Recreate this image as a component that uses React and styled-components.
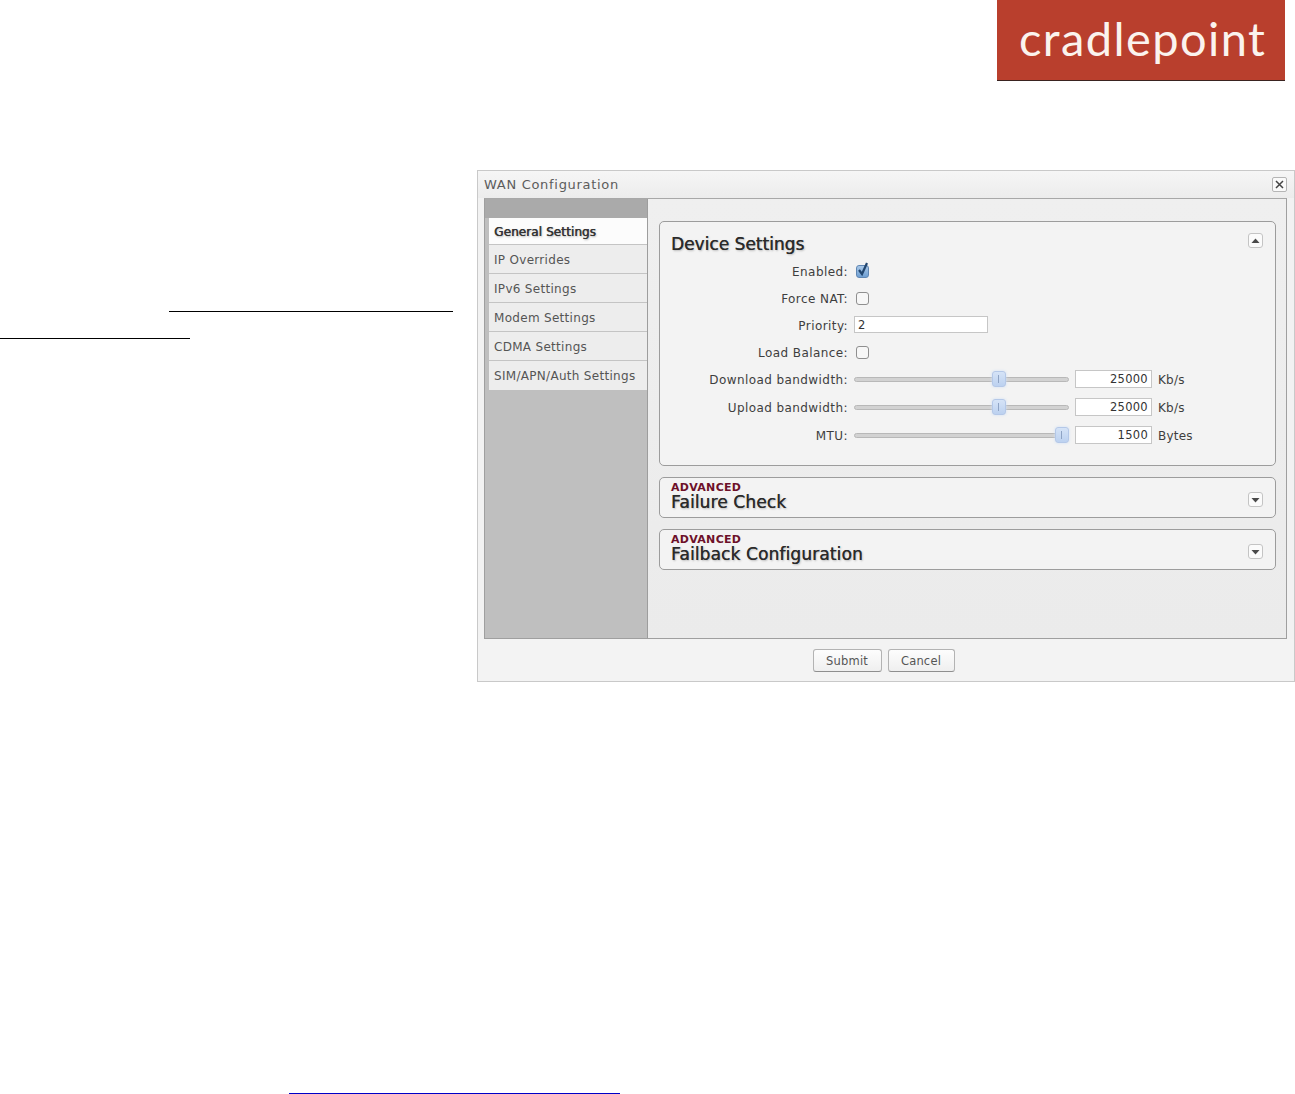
import React from 'react';
import styled, { createGlobalStyle } from 'styled-components';

const UI_FONT = '"DejaVu Sans", "Liberation Sans", sans-serif';

const GlobalStyle = createGlobalStyle`
  html, body {
    margin: 0;
    padding: 0;
    background: #fff;
    overflow: hidden;
  }
`;

const Page = styled.div`
  width: 1295px;
  height: 1094px;
  display: flex;
  flex-direction: column;
  font-family: ${UI_FONT};
`;

const Header = styled.header`
  height: 170px;
  display: flex;
  justify-content: flex-end;
  align-items: flex-start;
  padding-right: 10px;
  box-sizing: border-box;
`;

const Logo = styled.div`
  width: 288px;
  height: 81px;
  box-sizing: border-box;
  padding: 3px 0 0 22px;
  background: #b93f2d;
  border-bottom: 1px solid #3a2320;
  color: #fbf3ee;
  font-family: Lato, sans-serif;
  font-size: 47px;
  line-height: 70px;
  letter-spacing: 1.4px;
  white-space: nowrap;
`;

const Body = styled.div`
  display: flex;
  height: 512px;
`;

const TextColumn = styled.div`
  width: 477px;
  flex: none;
  padding-top: 141px;
  box-sizing: border-box;
`;

const Underline = styled.a`
  display: block;
  height: 1px;
  width: ${p => p.$width}px;
  margin-left: ${p => p.$left || 0}px;
  margin-bottom: ${p => p.$after || 0}px;
  background: ${p => p.$color || '#000'};
`;

const Dialog = styled.section`
  width: 818px;
  flex: none;
  box-sizing: border-box;
  border: 1px solid #c9c9c9;
  background: #f2f2f2;
  display: flex;
  flex-direction: column;
`;

const TitleBar = styled.div`
  height: 27px;
  flex: none;
  display: flex;
  align-items: center;
  justify-content: space-between;
  padding: 0 7px 0 6px;
  background: linear-gradient(#f6f6f6, #ececec);
`;

const Title = styled.h1`
  margin: 0;
  font-size: 13px;
  font-weight: 400;
  letter-spacing: 0.7px;
  color: #5c5c5c;
`;

const CloseButton = styled.button`
  width: 15px;
  height: 15px;
  padding: 0;
  display: flex;
  align-items: center;
  justify-content: center;
  box-sizing: border-box;
  border: 1px solid #b5b5b5;
  border-radius: 2px;
  background: #fafafa;
`;

const Inner = styled.div`
  height: 441px;
  flex: none;
  margin: 0 7px 0 6px;
  display: flex;
  box-sizing: border-box;
  border: 1px solid #9f9f9f;
  border-top-color: #a8a8a8;
`;

const Sidebar = styled.nav`
  width: 163px;
  flex: none;
  box-sizing: border-box;
  padding: 19px 0 0 4px;
  background: linear-gradient(#aaaaaa 0, #aaaaaa 19px, #bfbfbf 19px);
  border-right: 1px solid #9d9d9d;
`;

const Tab = styled.div`
  height: ${p => (p.$active ? 27 : 29)}px;
  box-sizing: border-box;
  padding: 2px 0 0 5px;
  display: flex;
  align-items: center;
  font-size: 12px;
  letter-spacing: ${p => (p.$active ? 0.1 : 0.3)}px;
  white-space: nowrap;
  color: ${p => (p.$active ? '#333' : '#555')};
  text-shadow: ${p => (p.$active ? '0.5px 0 0 #333, 1px 1px 2px #aaa' : 'none')};
  background: ${p => (p.$active ? '#fcfcfc' : '#ededed')};
  border-bottom: 1px solid #c4c4c4;
  &:last-child {
    border-bottom: none;
    padding-top: 0;
  }
`;

const Content = styled.div`
  flex: 1;
  display: flex;
  flex-direction: column;
  gap: 11px;
  padding: 22px 10px 0 11px;
  background: linear-gradient(#efefef, #ebebeb);
`;

const Panel = styled.div`
  box-sizing: border-box;
  border: 1px solid #9c9c9c;
  border-radius: 5px;
  background: #f3f3f3;
`;

const PanelHead = styled.div`
  display: flex;
  justify-content: space-between;
  align-items: flex-start;
  padding: ${p => (p.$collapsed ? '4px 12px 0 11px' : '11px 12px 0 11px')};
  height: ${p => (p.$collapsed ? 35 : 25)}px;
`;

const PanelTitle = styled.h2`
  margin: 0;
  font-size: 17px;
  line-height: ${p => (p.$collapsed ? 16 : 22)}px;
  letter-spacing: ${p => (p.$collapsed ? 0.12 : 0)}px;
  font-weight: 400;
  color: #2a2a2a;
  text-shadow: 0.3px 0 0 #444, 1px 1px 2px #b5b5b5;
  white-space: nowrap;
`;

const AdvancedTag = styled.div`
  font-size: 11px;
  line-height: 12px;
  font-weight: 700;
  letter-spacing: 0.3px;
  color: #6d1029;
`;

const Toggle = styled.button`
  width: 15px;
  height: 15px;
  padding: 0;
  margin-top: ${p => p.$top || 0}px;
  box-sizing: border-box;
  display: flex;
  align-items: center;
  justify-content: center;
  border: 1px solid #c4c4c4;
  border-radius: 3px;
  background: #fbfbfb;
`;

const Form = styled.div`
  padding: 0 0 15px;
`;

const Row = styled.div`
  display: grid;
  grid-template-columns: 188px 1fr;
  column-gap: 6px;
  align-items: center;
  height: ${p => p.$height || 27}px;
`;

const Label = styled.label`
  text-align: right;
  font-size: 12px;
  letter-spacing: 0.42px;
  color: #3e3e3e;
  white-space: nowrap;
`;

const Controls = styled.div`
  display: flex;
  align-items: center;
`;

const Check = styled.span`
  width: 13px;
  height: 13px;
  margin-left: 2px;
  box-sizing: border-box;
  position: relative;
  border: 1px solid ${p => (p.$on ? '#5f86b3' : '#8f8f8f')};
  border-radius: 3px;
  background: ${p => (p.$on ? 'linear-gradient(#a9c8e8, #6f9fd2)' : '#f7f7f7')};
`;

const CheckMark = styled.svg`
  position: absolute;
  left: -1px;
  top: -5px;
`;

const TextInput = styled.input`
  width: ${p => p.$width}px;
  height: ${p => p.$height || 18}px;
  margin-bottom: 2px;
  box-sizing: border-box;
  padding: 0 3px;
  border: 1px solid #c6c6c6;
  background: #fff;
  font-family: ${UI_FONT};
  font-size: 11.5px;
  letter-spacing: 0.3px;
  color: #333;
  text-align: ${p => (p.$right ? 'right' : 'left')};
  outline: none;
`;

const Track = styled.div`
  width: 215px;
  height: 5px;
  margin: 0 6px 2px 0;
  position: relative;
  box-sizing: border-box;
  border: 1px solid #b8b8b8;
  border-radius: 3px;
  background: #d2d2d2;
`;

const Thumb = styled.span`
  position: absolute;
  top: -7px;
  width: 14px;
  height: 16px;
  box-sizing: border-box;
  border: 1px solid #b4c8e8;
  border-radius: 3px;
  background: linear-gradient(#d5e3f7, #bcd1f0);
  box-shadow: 0 0 3px #cfdff5;
  &::after {
    content: '';
    position: absolute;
    left: 5px;
    top: 3px;
    width: 1px;
    height: 8px;
    background: #8ea3c4;
  }
`;

const Unit = styled.span`
  margin-left: 6px;
  font-size: 12px;
  letter-spacing: 0.2px;
  color: #3e3e3e;
`;

const Footer = styled.div`
  flex: 1;
  display: flex;
  justify-content: center;
  align-items: flex-start;
  gap: 6px;
  padding: 10px 5px 0 0;
  background: #f3f3f3;
`;

const ActionButton = styled.button`
  width: ${p => p.$width}px;
  height: 23px;
  padding: 1px 0 0;
  box-sizing: border-box;
  border: 1px solid #b3b3b3;
  border-bottom-color: #8f8f8f;
  border-radius: 3px;
  background: linear-gradient(#fdfdfd, #efefef);
  font-family: ${UI_FONT};
  font-size: 11.5px;
  letter-spacing: 0.2px;
  color: #555;
`;

const Bottom = styled.div`
  flex: 1;
  display: flex;
  align-items: flex-end;
`;

const Caret = ({ up }) => (
  <svg width="9" height="6" viewBox="0 0 9 6">
    <path d={up ? 'M4.5 0.5 L8.5 5 H0.5 Z' : 'M0.5 1 H8.5 L4.5 5.5 Z'} fill="#4a4a4a" />
  </svg>
);

const TABS = [
  'General Settings',
  'IP Overrides',
  'IPv6 Settings',
  'Modem Settings',
  'CDMA Settings',
  'SIM/APN/Auth Settings',
];

const SLIDERS = [
  { label: 'Download bandwidth:', value: '25000', unit: 'Kb/s', pos: 137 },
  { label: 'Upload bandwidth:', value: '25000', unit: 'Kb/s', pos: 137 },
  { label: 'MTU:', value: '1500', unit: 'Bytes', pos: 200 },
];

const CollapsedPanel = ({ title }) => (
  <Panel>
    <PanelHead $collapsed>
      <div>
        <AdvancedTag>ADVANCED</AdvancedTag>
        <PanelTitle $collapsed>{title}</PanelTitle>
      </div>
      <Toggle $top={10}>
        <Caret />
      </Toggle>
    </PanelHead>
  </Panel>
);

export default function App() {
  return (
    <Page>
      <GlobalStyle />
      <Header>
        <Logo>cradlepoint</Logo>
      </Header>
      <Body>
        <TextColumn>
          <Underline $left={169} $width={284} $after={26} />
          <Underline $width={190} />
        </TextColumn>
        <Dialog>
          <TitleBar>
            <Title>WAN Configuration</Title>
            <CloseButton>
              <svg width="9" height="9" viewBox="0 0 9 9">
                <path d="M1 1 L8 8 M8 1 L1 8" stroke="#444" strokeWidth="1.5" />
              </svg>
            </CloseButton>
          </TitleBar>
          <Inner>
            <Sidebar>
              {TABS.map((tab, i) => (
                <Tab key={tab} $active={i === 0}>
                  {tab}
                </Tab>
              ))}
            </Sidebar>
            <Content>
              <Panel>
                <PanelHead>
                  <PanelTitle>Device Settings</PanelTitle>
                  <Toggle>
                    <Caret up />
                  </Toggle>
                </PanelHead>
                <Form>
                  <Row>
                    <Label>Enabled:</Label>
                    <Controls>
                      <Check $on>
                        <CheckMark width="14" height="17" viewBox="0 0 14 17">
                          <path d="M3 9 L6 13 L11 2" fill="none" stroke="#22466f" strokeWidth="2.2" />
                        </CheckMark>
                      </Check>
                    </Controls>
                  </Row>
                  <Row>
                    <Label>Force NAT:</Label>
                    <Controls>
                      <Check />
                    </Controls>
                  </Row>
                  <Row>
                    <Label>Priority:</Label>
                    <Controls>
                      <TextInput $width={134} $height={17} defaultValue="2" readOnly />
                    </Controls>
                  </Row>
                  <Row>
                    <Label>Load Balance:</Label>
                    <Controls>
                      <Check />
                    </Controls>
                  </Row>
                  {SLIDERS.map(s => (
                    <Row key={s.label} $height={28}>
                      <Label>{s.label}</Label>
                      <Controls>
                        <Track>
                          <Thumb style={{ left: s.pos }} />
                        </Track>
                        <TextInput $width={77} $right defaultValue={s.value} readOnly />
                        <Unit>{s.unit}</Unit>
                      </Controls>
                    </Row>
                  ))}
                </Form>
              </Panel>
              <CollapsedPanel title="Failure Check" />
              <CollapsedPanel title="Failback Configuration" />
            </Content>
          </Inner>
          <Footer>
            <ActionButton $width={69}>Submit</ActionButton>
            <ActionButton $width={67}>Cancel</ActionButton>
          </Footer>
        </Dialog>
      </Body>
      <Bottom>
        <Underline $left={289} $width={331} $color="#0000c8" />
      </Bottom>
    </Page>
  );
}
